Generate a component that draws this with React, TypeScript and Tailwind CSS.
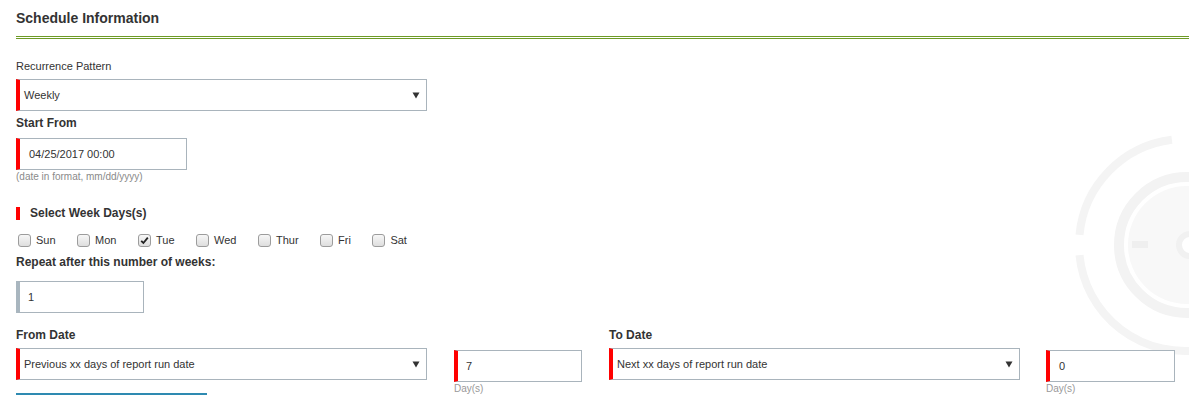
import React from "react";

const Arrow = () => (
  <svg width="8" height="7" viewBox="0 0 8 7" className="shrink-0">
    <path d="M0.5 0.5 L7.5 0.5 L4 6.5 Z" fill="#333" />
  </svg>
);

function Select({ text, w }: { text: string; w: string }) {
  return (
    <div
      className={`flex h-[32px] ${w} items-center justify-between border border-[#a9b4bc] border-l-4 border-l-[#ff0000] bg-white pl-[4px] pr-[6px] text-[11px] text-[#333]`}
    >
      <span>{text}</span>
      <Arrow />
    </div>
  );
}

function Checkbox({ checked }: { checked?: boolean }) {
  return (
    <span className="relative inline-flex h-[13px] w-[13px] shrink-0 items-center justify-center rounded-[3px] border border-[#9c9c9c] bg-gradient-to-b from-[#f7f7f7] to-[#dedede]">
      {checked && (
        <svg width="9" height="9" viewBox="0 0 9 9">
          <path d="M1.2 4.8 L3.4 7 L7.8 1.6" stroke="#222" strokeWidth="1.8" fill="none" />
        </svg>
      )}
    </span>
  );
}

const days = ["Sun", "Mon", "Tue", "Wed", "Thur", "Fri", "Sat"];

export default function App() {
  return (
    <div
      className="relative h-[395px] w-[1189px] overflow-hidden bg-white text-[#333]"
      style={{ fontFamily: '"Liberation Sans", Arial, sans-serif' }}
    >
      <svg
        className="pointer-events-none absolute left-0 top-0"
        width="1189"
        height="395"
        viewBox="0 0 1189 395"
      >
        <path
          d="M1171.9 139.8 A106 106 0 0 0 1079.5 234.8"
          stroke="#f4f4f4"
          strokeWidth="8"
          fill="none"
        />
        <path
          d="M1079.5 255.2 A106 106 0 0 0 1203.4 349.4"
          stroke="#f4f4f4"
          strokeWidth="8"
          fill="none"
        />
        <circle cx="1187" cy="245" r="68" stroke="#f3f3f3" strokeWidth="10" fill="none" />
        <circle cx="1187" cy="245" r="59" fill="#f8f8f8" />
        <rect x="1132" y="241" width="16" height="7" fill="#efefef" />
        <circle cx="1190" cy="245" r="11" stroke="#f1f1f1" strokeWidth="6" fill="#ffffff" />
      </svg>

      <div className="relative pl-[16px]">
        <div className="mt-[8px] flex h-[20px] items-center text-[14px] font-bold text-[#333]">
          Schedule Information
        </div>
        <div className="mt-[8px] h-[3px] border-y border-[#6e9b26]" />

        <div className="mt-[19px] flex h-[16px] items-center text-[11px]">Recurrence Pattern</div>
        <div className="mt-[5px]">
          <Select text="Weekly" w="w-[411px]" />
        </div>

        <div className="mt-[4px] flex h-[16px] items-center text-[12px] font-bold">Start From</div>
        <div className="mt-[7px] flex h-[32px] w-[171px] items-center border border-[#a9b4bc] border-l-4 border-l-[#ff0000] bg-white pl-[9px] text-[11px]">
          04/25/2017 00:00
        </div>
        <div className="flex h-[13px] items-center text-[10px] text-[#8a8a8a]">
          (date in format, mm/dd/yyyy)
        </div>

        <div className="mt-[22px] flex h-[16px] items-center">
          <span className="h-[13px] w-[4px] bg-[#ff0000]" />
          <span className="ml-[10px] text-[12px] font-bold">Select Week Days(s)</span>
        </div>

        <div className="mt-[11px] flex h-[16px] items-center gap-[21.5px] pl-[2px] text-[11px]">
          {days.map((d) => (
            <label key={d} className="flex items-center gap-[5px]">
              <Checkbox checked={d === "Tue"} />
              <span>{d}</span>
            </label>
          ))}
        </div>

        <div className="mt-[6px] flex h-[16px] items-center text-[12px] font-bold">
          Repeat after this number of weeks:
        </div>
        <div className="mt-[11px] flex h-[32px] w-[128px] items-center border border-[#a9b4bc] border-l-4 border-l-[#a9b6bf] bg-white pl-[8px] text-[11px]">
          1
        </div>

        <div className="mt-[14px] flex items-start">
          <div className="flex w-[411px] flex-col">
            <div className="flex h-[16px] items-center text-[12px] font-bold">From Date</div>
            <div className="mt-[5px]">
              <Select text="Previous xx days of report run date" w="w-[411px]" />
            </div>
            <div className="mt-[13px] h-[2px] w-[191px] bg-[#2e8ab1]" />
          </div>

          <div className="ml-[27px] flex w-[128px] flex-col pt-[23px]">
            <div className="flex h-[32px] items-center border border-[#a9b4bc] border-l-4 border-l-[#ff0000] bg-white pl-[8px] text-[11px]">
              7
            </div>
            <div className="flex h-[13px] items-center text-[10px] text-[#999]">Day(s)</div>
          </div>

          <div className="ml-[27px] flex w-[411px] flex-col">
            <div className="flex h-[16px] items-center text-[12px] font-bold">To Date</div>
            <div className="mt-[5px]">
              <Select text="Next xx days of report run date" w="w-[411px]" />
            </div>
          </div>

          <div className="ml-[26px] flex w-[129px] flex-col pt-[23px]">
            <div className="flex h-[32px] items-center border border-[#a9b4bc] border-l-4 border-l-[#ff0000] bg-white pl-[9px] text-[11px]">
              0
            </div>
            <div className="flex h-[13px] items-center text-[10px] text-[#999]">Day(s)</div>
          </div>
        </div>
      </div>
    </div>
  );
}
